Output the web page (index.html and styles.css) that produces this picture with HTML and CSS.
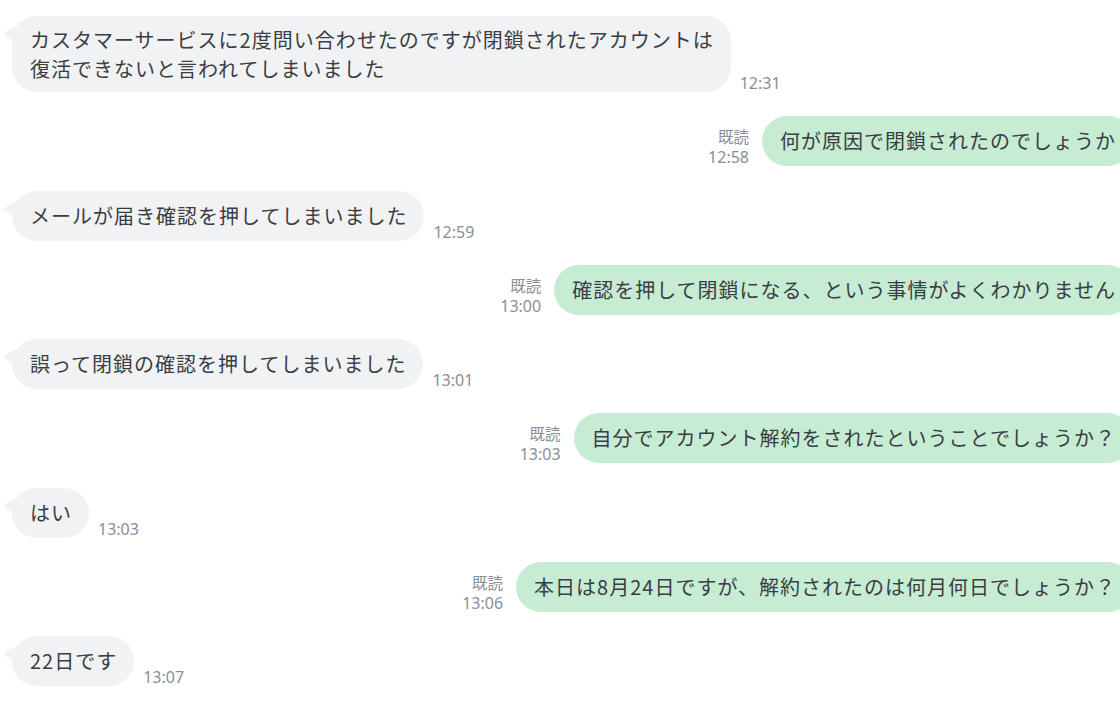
FILE: index.html
```html
<!DOCTYPE html>
<html lang="ja">
  <head>
    <meta charset="UTF-8" />
    <meta name="viewport" content="width=device-width, initial-scale=1.0" />
    <title>トーク</title>
    <link rel="stylesheet" href="styles.css">
  </head>
  <body>
    <div class="chat">
      <div class="msg msg-in">
        <div class="bubble bubble-multi">
          <p class="line">カスタマーサービスに2度問い合わせたのですが閉鎖されたアカウントは</p>
          <p class="line">復活できないと言われてしまいました</p>
        </div>
        <span class="time">12:31</span>
      </div>
      <div class="msg msg-out">
        <div class="meta">
          <span class="read">既読</span>
          <span class="time">12:58</span>
        </div>
        <div class="bubble">何が原因で閉鎖されたのでしょうか</div>
      </div>
      <div class="msg msg-in">
        <div class="bubble">メールが届き確認を押してしまいました</div>
        <span class="time">12:59</span>
      </div>
      <div class="msg msg-out">
        <div class="meta">
          <span class="read">既読</span>
          <span class="time">13:00</span>
        </div>
        <div class="bubble">確認を押して閉鎖になる、という事情がよくわかりません</div>
      </div>
      <div class="msg msg-in">
        <div class="bubble">誤って閉鎖の確認を押してしまいました</div>
        <span class="time">13:01</span>
      </div>
      <div class="msg msg-out">
        <div class="meta">
          <span class="read">既読</span>
          <span class="time">13:03</span>
        </div>
        <div class="bubble">自分でアカウント解約をされたということでしょうか？</div>
      </div>
      <div class="msg msg-in">
        <div class="bubble">はい</div>
        <span class="time">13:03</span>
      </div>
      <div class="msg msg-out">
        <div class="meta">
          <span class="read">既読</span>
          <span class="time">13:06</span>
        </div>
        <div class="bubble">本日は8月24日ですが、解約されたのは何月何日でしょうか？</div>
      </div>
      <div class="msg msg-in">
        <div class="bubble">22日です</div>
        <span class="time">13:07</span>
      </div>
    </div>
  </body>
</html>
```

FILE: styles.css
```css
html,
body {
  margin: 0;
  overflow: hidden;
  background-color: #fff;
}
body {
  font-family: "Noto Sans CJK JP", "Noto Sans", sans-serif;
  color: #3a3d42;
}
.chat {
  width: 1145px;
  box-sizing: border-box;
  padding: 16px 12px;
  display: flex;
  flex-direction: column;
  gap: 24.3px;
}
.msg {
  display: flex;
  align-items: flex-end;
}
.msg-out {
  justify-content: flex-end;
}
.bubble {
  position: relative;
  padding: 12px 17px 12px 18px;
  border-radius: 25px;
  font-size: 20px;
  line-height: 26px;
  letter-spacing: 1px;
  white-space: nowrap;
}
.bubble-multi {
  padding-top: 9px;
  padding-bottom: 9px;
  line-height: 29px;
}
.line {
  margin: 0;
}
.msg-in .bubble {
  background-color: #f1f2f4;
}
.msg-out .bubble {
  background-color: #c6ecd3;
}
.bubble::before {
  content: "";
  position: absolute;
  top: 10px;
  width: 0;
  height: 0;
  border-top: 8px solid transparent;
  border-bottom: 8px solid transparent;
}
.msg-in .bubble::before {
  left: -9px;
  border-right: 12px solid #f1f2f4;
}
.msg-out .bubble::before {
  right: -9px;
  border-left: 12px solid #c6ecd3;
}
.time {
  font-family: "Noto Sans", "Noto Sans CJK JP", sans-serif;
  font-size: 16px;
  line-height: 20px;
  color: #8a8e95;
}
.msg-in .time {
  margin-left: 9px;
  margin-bottom: -1px;
}
.meta {
  display: flex;
  flex-direction: column;
  align-items: flex-end;
  margin-right: 13px;
  margin-bottom: -1px;
}
.read {
  font-size: 15.5px;
  line-height: 22px;
  color: #8a8e95;
}
```
